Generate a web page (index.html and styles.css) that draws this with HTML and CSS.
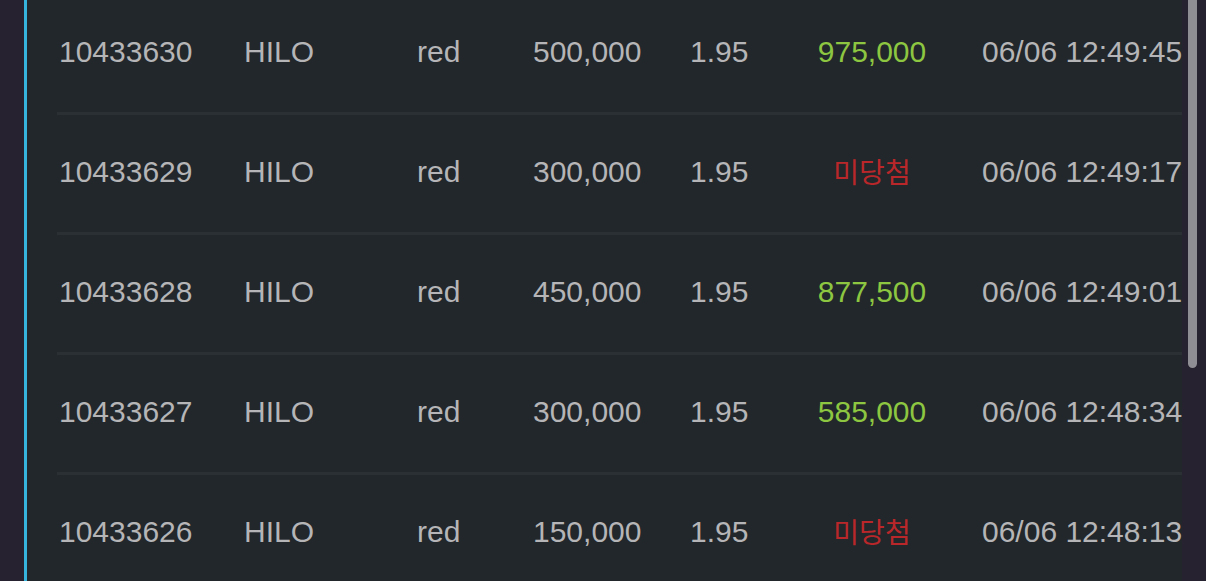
FILE: index.html
```html
<!DOCTYPE html>
<html lang="ko">
<head>
<meta charset="utf-8">
<title>Bet history</title>
<link rel="stylesheet" href="styles.css">
</head>
<body>
<div class="frame">
  <div class="gutter-left"></div>
  <div class="accent"></div>
  <div class="panel">
    <div class="list">
      <div class="row">
        <span class="c id">10433630</span>
        <span class="c game">HILO</span>
        <span class="c pick">red</span>
        <span class="c amount">500,000</span>
        <span class="c odds">1.95</span>
        <span class="c result win">975,000</span>
        <span class="c time">06/06 12:49:45</span>
      </div>
      <div class="row">
        <span class="c id">10433629</span>
        <span class="c game">HILO</span>
        <span class="c pick">red</span>
        <span class="c amount">300,000</span>
        <span class="c odds">1.95</span>
        <span class="c result lose">미당첨</span>
        <span class="c time">06/06 12:49:17</span>
      </div>
      <div class="row">
        <span class="c id">10433628</span>
        <span class="c game">HILO</span>
        <span class="c pick">red</span>
        <span class="c amount">450,000</span>
        <span class="c odds">1.95</span>
        <span class="c result win">877,500</span>
        <span class="c time">06/06 12:49:01</span>
      </div>
      <div class="row">
        <span class="c id">10433627</span>
        <span class="c game">HILO</span>
        <span class="c pick">red</span>
        <span class="c amount">300,000</span>
        <span class="c odds">1.95</span>
        <span class="c result win">585,000</span>
        <span class="c time">06/06 12:48:34</span>
      </div>
      <div class="row">
        <span class="c id">10433626</span>
        <span class="c game">HILO</span>
        <span class="c pick">red</span>
        <span class="c amount">150,000</span>
        <span class="c odds">1.95</span>
        <span class="c result lose">미당첨</span>
        <span class="c time">06/06 12:48:13</span>
      </div>
    </div>
  </div>
  <div class="gutter-right">
    <div class="scrollbar"></div>
  </div>
</div>
</body>
</html>
```

FILE: styles.css
```css
html, body {
  margin: 0;
  padding: 0;
  background: #27222f;
  height: 100%;
  overflow: hidden;
}

.frame {
  display: flex;
  width: 1206px;
  height: 581px;
  overflow: hidden;
  font-family: "Liberation Sans", Arial, "Noto Sans CJK KR", sans-serif;
}

.gutter-left {
  width: 24px;
  flex: none;
  background: #27222f;
}

.accent {
  width: 3px;
  flex: none;
  background: #37b4de;
}

.panel {
  width: 1155px;
  flex: none;
  background: #22272b;
  overflow: hidden;
}

.list {
  margin-top: -5px;
  margin-left: 30px;
}

.row {
  display: grid;
  grid-template-columns: 185px 173px 116px 157px 72px 220px 1fr;
  align-items: center;
  height: 117px;
  padding-left: 2px;
  border-bottom: 3px solid #2b3034;
  font-size: 30px;
  line-height: 33px;
  color: #b5b5b7;
  white-space: nowrap;
}

.c {
  display: block;
  padding-bottom: 4px;
}

.result {
  text-align: center;
}

.win {
  color: #8dc641;
}

.lose {
  color: #b9272a;
  font-family: "Noto Sans CJK KR", sans-serif;
  font-size: 28px;
}

.time {
  overflow: hidden;
}

.gutter-right {
  flex: 1;
  background: #27222f;
  padding-left: 6px;
}

.scrollbar {
  width: 9px;
  height: 368px;
  background: #8f8e94;
  border-radius: 0 0 5px 5px;
}
```
